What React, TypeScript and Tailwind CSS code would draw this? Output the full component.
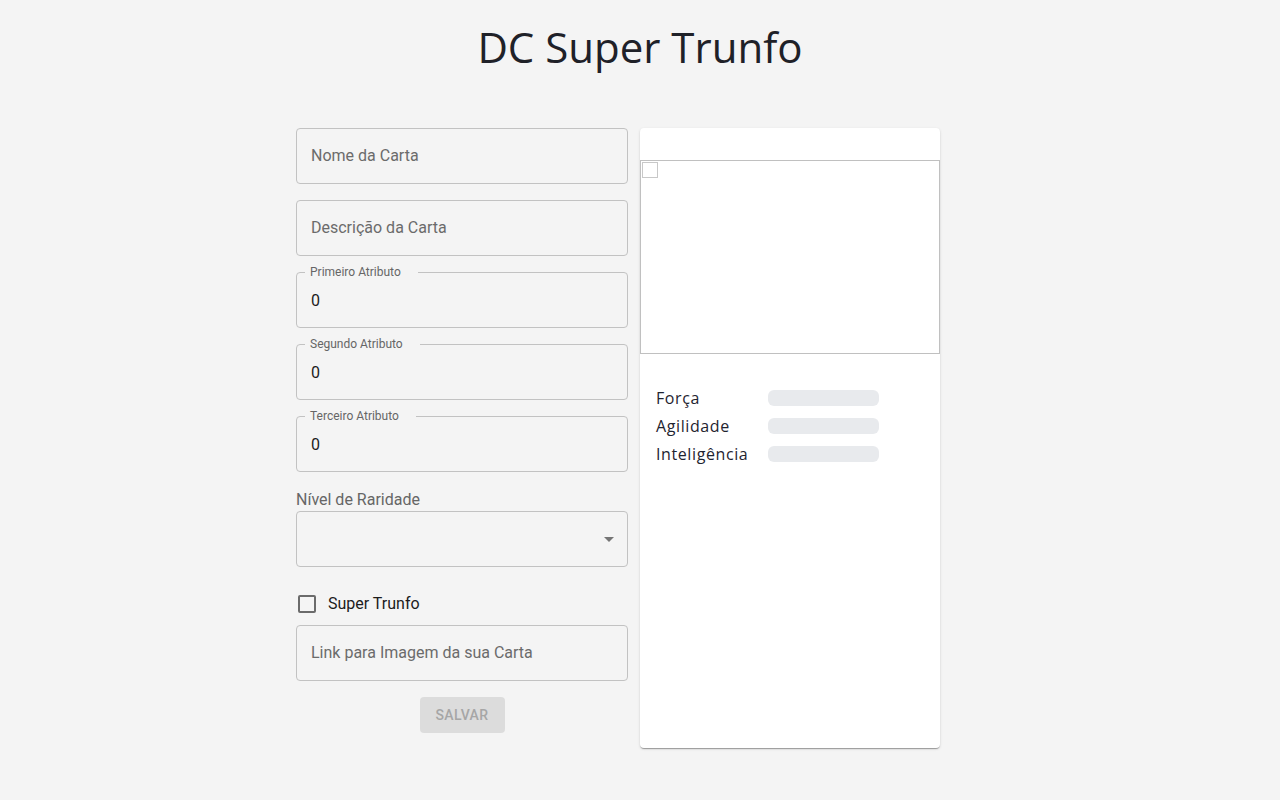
import React from "react";

type FieldProps = {
  placeholder?: string;
  label?: string;
  value?: string;
};

function OutlinedField({ placeholder, label, value }: FieldProps) {
  return (
    <div className="relative h-14 w-full rounded-[4px] border border-[#c2c2c2]">
      {label && (
        <span className="absolute left-[8px] top-[-8px] bg-[#f4f4f4] pl-[5px] pr-[17px] text-[12px] leading-[14px] text-[#666666]">
          {label}
        </span>
      )}
      <div className="flex h-full items-center px-[14px] text-[16px]">
        {value !== undefined ? (
          <span className="pt-[2px] text-[#1c1c1c]">{value}</span>
        ) : (
          <span className="text-[#6b6b6b]">{placeholder}</span>
        )}
      </div>
    </div>
  );
}

function StatRow({ name }: { name: string }) {
  return (
    <div className="flex h-7 items-center">
      <span className="w-[112px] pb-[1px] text-[16px] tracking-[0.6px] text-[#1f2430]">{name}</span>
      <div className="h-4 w-[111px] rounded-[6px] bg-[#e8eaed]" />
    </div>
  );
}

export default function App() {
  return (
    <div
      className="min-h-screen bg-[#f4f4f4] pt-6"
      style={{ fontFamily: "Roboto, 'Liberation Sans', sans-serif" }}
    >
      <h1
        className="text-center text-[42px] font-medium leading-[46px] text-[#1f2128]"
        style={{ fontFamily: "'Open Sans', 'Noto Sans', sans-serif" }}
      >
        DC Super Trunfo
      </h1>

      <main className="mt-[58px] flex justify-center gap-3 pr-[44px]">
        <form className="flex w-[332px] flex-col">
          <div className="flex flex-col gap-4">
            <OutlinedField placeholder="Nome da Carta" />
            <OutlinedField placeholder="Descrição da Carta" />
            <OutlinedField label="Primeiro Atributo" value="0" />
            <OutlinedField label="Segundo Atributo" value="0" />
            <OutlinedField label="Terceiro Atributo" value="0" />
          </div>

          <label className="mt-4 block text-[16px] leading-[23px] text-[#666666]">
            Nível de Raridade
          </label>
          <div className="relative flex h-14 items-center justify-end rounded-[4px] border border-[#c2c2c2] pr-[13px]">
            <svg width="10" height="5" viewBox="0 0 10 5" className="fill-[#757575]">
              <path d="M0 0h10L5 5z" />
            </svg>
          </div>

          <div className="mt-4 flex h-[42px] items-center">
            <div className="ml-[2px] h-[18px] w-[18px] rounded-[2px] border-2 border-[#6b6b6b]" />
            <span className="ml-[12px] text-[16px] text-[#1c1c1c]">Super Trunfo</span>
          </div>

          <OutlinedField placeholder="Link para Imagem da sua Carta" />

          <div className="mt-4 flex justify-center">
            <button
              type="button"
              disabled
              className="h-9 w-[85px] rounded-[4px] bg-[#dcdcdc] text-[14px] font-medium uppercase tracking-[0.4px] text-[#a6a6a6]"
            >
              Salvar
            </button>
          </div>
        </form>

        <section
          className="flex h-[620px] w-[300px] flex-col rounded-[4px] bg-white pt-8 shadow-[0_2px_1px_-1px_rgba(0,0,0,0.2),0_1px_1px_0_rgba(0,0,0,0.14),0_1px_3px_0_rgba(0,0,0,0.12)]"
          style={{ fontFamily: "'Open Sans', 'Noto Sans', sans-serif" }}
        >
          <div className="h-[194px] w-full border border-[#c0c0c0] p-px">
            <div className="h-4 w-4 border border-[#c8c8c8]" />
          </div>
          <div className="mt-[30px] flex flex-col px-4">
            <StatRow name="Força" />
            <StatRow name="Agilidade" />
            <StatRow name="Inteligência" />
          </div>
        </section>
      </main>
    </div>
  );
}
